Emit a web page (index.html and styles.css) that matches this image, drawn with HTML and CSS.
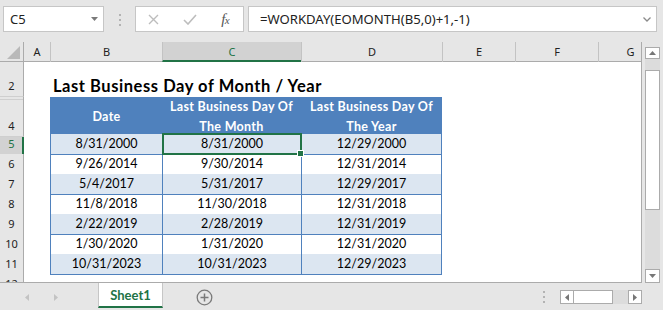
FILE: index.html
```html
<!DOCTYPE html>
<html>
<head>
<meta charset="utf-8">
<link rel="stylesheet" href="styles.css">
</head>
<body>
<div class="toolbar">
  <div class="namebox"><span>C5</span><svg width="7" height="4" viewBox="0 0 7 4"><path d="M0 0h7L3.5 4z" fill="#7a7a7a"/></svg></div>
  <div class="grip"><i></i><i></i><i></i></div>
  <div class="fbtns">
    <span class="fb"><svg width="11" height="11" viewBox="0 0 11 11"><path d="M1 1l9 9M10 1l-9 9" stroke="#bdbdbd" stroke-width="1.4" fill="none"/></svg></span>
    <span class="fb"><svg width="14" height="11" viewBox="0 0 14 11"><path d="M1 6l4 4 8-9" stroke="#bdbdbd" stroke-width="1.6" fill="none"/></svg></span>
    <span class="fb fx"><i>f<small>x</small></i></span>
  </div>
  <div class="formula"><span>=WORKDAY(EOMONTH(B5,0)+1,-1)</span><svg width="8" height="5" viewBox="0 0 8 5"><path d="M0.5 0.5l3.5 3.5 3.5-3.5" stroke="#8a8a8a" stroke-width="1.3" fill="none"/></svg></div>
</div>
<div class="main">
  <div class="sheet">
    <div class="row colhdr">
      <div class="corner"><svg width="13" height="13" viewBox="0 0 13 13"><path d="M13 0v13H0z" fill="#b9b9b9"/></svg></div>
      <div class="ch">A</div><div class="ch">B</div><div class="ch sel">C</div><div class="ch">D</div><div class="ch">E</div><div class="ch">F</div><div class="ch">G</div>
    </div>
    <div class="row r2">
      <div class="rh">2</div><div></div>
      <div class="title">Last Business Day of Month / Year</div>
    </div>
    <div class="row r4">
      <div class="rh rh4">4</div><div></div>
      <div class="th first">Date</div>
      <div class="th">Last Business Day Of<br>The Month</div>
      <div class="th">Last Business Day Of<br>The Year</div>
    </div>
    <div class="row body alt">
      <div class="rh rhsel">5</div><div></div>
      <div class="td first">8/31/2000</div><div class="td cur">8/31/2000</div><div class="td last">12/29/2000</div>
    </div>
    <div class="row body">
      <div class="rh">6</div><div></div>
      <div class="td first">9/26/2014</div><div class="td">9/30/2014</div><div class="td last">12/31/2014</div>
    </div>
    <div class="row body alt">
      <div class="rh">7</div><div></div>
      <div class="td first">5/4/2017</div><div class="td">5/31/2017</div><div class="td last">12/29/2017</div>
    </div>
    <div class="row body">
      <div class="rh">8</div><div></div>
      <div class="td first">11/8/2018</div><div class="td">11/30/2018</div><div class="td last">12/31/2018</div>
    </div>
    <div class="row body alt">
      <div class="rh">9</div><div></div>
      <div class="td first">2/22/2019</div><div class="td">2/28/2019</div><div class="td last">12/31/2019</div>
    </div>
    <div class="row body">
      <div class="rh">10</div><div></div>
      <div class="td first">1/30/2020</div><div class="td">1/31/2020</div><div class="td last">12/31/2020</div>
    </div>
    <div class="row body alt">
      <div class="rh">11</div><div></div>
      <div class="td first">10/31/2023</div><div class="td">10/31/2023</div><div class="td last">12/29/2023</div>
    </div>
    <div class="row">
      <div class="rh">12</div>
    </div>
  </div>
  <div class="vscroll">
    <div class="sbtn up"><svg width="7" height="4" viewBox="0 0 7 4"><path d="M0 4h7L3.5 0z" fill="#777"/></svg></div>
    <div class="vtrack"><div class="vthumb"></div></div>
    <div class="sbtn down"><svg width="7" height="4" viewBox="0 0 7 4"><path d="M0 0h7L3.5 4z" fill="#777"/></svg></div>
  </div>
</div>
<div class="bottombar">
  <svg class="nav navl" width="4" height="7" viewBox="0 0 4 7"><path d="M4 0v7L0 3.5z" fill="#c3c3c3"/></svg>
  <svg class="nav navr" width="4" height="7" viewBox="0 0 4 7"><path d="M0 0v7L4 3.5z" fill="#c3c3c3"/></svg>
  <div class="tab">Sheet1</div>
  <svg class="plus" width="17" height="17" viewBox="0 0 17 17"><circle cx="8.5" cy="8.5" r="7.3" stroke="#7a7a7a" stroke-width="1.3" fill="none"/><path d="M8.5 4.5v8M4.5 8.5h8" stroke="#7a7a7a" stroke-width="1.5"/></svg>
  <div class="hgrip"><i></i><i></i><i></i></div>
  <div class="hscroll">
    <div class="hbtn"><svg width="4" height="7" viewBox="0 0 4 7"><path d="M4 0v7L0 3.5z" fill="#777"/></svg></div>
    <div class="hthumb"></div>
    <div class="htrack"></div>
    <div class="hbtn"><svg width="4" height="7" viewBox="0 0 4 7"><path d="M0 0v7L4 3.5z" fill="#777"/></svg></div>
  </div>
</div>
</body>
</html>
```

FILE: styles.css
```css
*, *::before, *::after { box-sizing: border-box; margin: 0; padding: 0; }
html, body { width: 663px; height: 310px; overflow: hidden; }
body { background: #e6e6e6; font-family: "Noto Sans", "Open Sans", sans-serif; color: #222; }

.toolbar { height: 42px; display: flex; align-items: flex-start; padding-top: 6px; }
.namebox { margin-left: 3px; width: 101px; height: 26px; background: #fff; border: 1px solid #c6c6c6; display: flex; align-items: center; justify-content: space-between; padding: 0 5px 0 6px; font-size: 13px; color: #222; }
.grip { width: 31px; display: flex; flex-direction: column; align-items: center; gap: 3px; padding-top: 8px; }
.grip i, .hgrip i { display: block; width: 2px; height: 2px; background: #b3b3b3; }
.fbtns { width: 109px; height: 26px; background: #fff; border: 1px solid #c6c6c6; display: flex; align-items: center; }
.fb { width: 36px; height: 24px; display: flex; align-items: center; justify-content: center; }
.fx i { font-family: "Liberation Serif", serif; font-style: italic; font-size: 15px; color: #555; letter-spacing: -0.5px; }
.fx small { font-size: 11px; }
.formula { margin-left: 4px; width: 409px; height: 26px; background: #fff; border: 1px solid #c6c6c6; display: flex; align-items: center; justify-content: space-between; padding: 0 5px 0 11px; font-size: 13.1px; color: #222; }

.main { display: flex; height: 241px; }
.sheet { width: 642px; height: 241px; background: #fff; border-right: 1px solid #ababab; border-bottom: 1px solid #ababab; overflow: hidden; }
.row { display: grid; grid-template-columns: 24px 26px 112px 139px 141px 73px 83px 64px; height: 20px; }
.colhdr { height: 20px; background: #e6e6e6; border-bottom: 1px solid #ababab; }
.corner { border-right: 1px solid #ababab; display: flex; align-items: flex-end; justify-content: flex-end; padding: 0 3px 3px 0; }
.ch { border-left: 1px solid #c3c3c3; font-size: 11px; line-height: 19px; text-align: center; color: #222; }
.ch:nth-child(2) { border-left: none; }
.ch.sel { background: #d2d2d2; color: #217346; border-bottom: 2px solid #217346; height: 20px; }

.rh { background: #e6e6e6; border-right: 1px solid #ababab; border-bottom: 1px solid #cfcfcf; font-size: 11px; line-height: 20px; text-align: center; display: flex; align-items: flex-end; justify-content: center; color: #222; }
.rhsel { background: #d2d2d2; color: #217346; border-right: 2px solid #217346; padding-left: 1px; }
.r2 { height: 35px; }
.r4 { height: 37px; }
.rh4 { position: relative; }
.rh4::before { content: ""; position: absolute; left: 0; right: 0; top: 2px; border-top: 1px solid #cfcfcf; }

.title { font-family: Lato, "Liberation Sans", sans-serif; font-weight: 700; font-size: 16.5px; letter-spacing: 0.55px; line-height: 20px; white-space: nowrap; align-self: end; padding: 0 0 1px 3px; color: #000; }

.th { background: #4f81bd; color: #fff; font-family: Lato, "Liberation Sans", sans-serif; font-weight: 700; font-size: 12.5px; letter-spacing: 0.3px; line-height: 20px; text-align: center; display: flex; align-items: center; justify-content: center; white-space: nowrap; }
.th.first { border-left: 1px solid #4f81bd; }

.td { font-family: Lato, "Liberation Sans", sans-serif; font-size: 12.5px; line-height: 19px; text-align: center; color: #000; border-left: 1px solid #4f81bd; border-bottom: 1px solid #4f81bd; }
.td.last { border-right: 1px solid #4f81bd; }
.alt .td { background: #dce6f1; }
.cur { position: relative; }
.cur::after { content: ""; position: absolute; left: -1px; top: -1px; width: 140px; height: 22px; border: 2px solid #217346; }
.cur::before { content: ""; position: absolute; left: 134px; top: 16px; width: 7px; height: 7px; background: #217346; border: 1px solid #fff; z-index: 2; }

.vscroll { margin-left: 3px; width: 15px; display: flex; flex-direction: column; }
.sbtn { width: 15px; height: 12px; background: #fff; border: 1px solid #ababab; display: flex; align-items: center; justify-content: center; }
.up { margin-top: 5px; }
.vtrack { flex: 1; background: #dcdcdc; padding-top: 11px; }
.vthumb { height: 140px; background: #fff; border: 1px solid #ababab; }
.down { height: 14px; }

.bottombar { height: 27px; display: flex; align-items: center; }
.nav { margin-top: 1px; }
.navl { margin-left: 25px; }
.navr { margin-left: 25px; }
.tab { margin-left: 40px; align-self: flex-start; width: 65px; height: 25px; background: #fff; border-left: 1px solid #c6c6c6; border-right: 1px solid #c6c6c6; border-bottom: 2px solid #217346; font-family: Lato, "Liberation Sans", sans-serif; font-weight: 700; font-size: 13px; color: #217346; text-align: center; line-height: 24px; }
.plus { margin-left: 33px; margin-top: 1px; }
.hgrip { margin-left: 330px; display: flex; flex-direction: column; gap: 3px; margin-top: 1px; }
.hscroll { margin-left: 15px; display: flex; height: 14px; margin-top: 1px; }
.hbtn { width: 14px; height: 14px; background: #fff; border: 1px solid #ababab; display: flex; align-items: center; justify-content: center; }
.hthumb { width: 39px; height: 14px; background: #fff; border: 1px solid #ababab; border-left: none; }
.htrack { width: 15px; background: #dcdcdc; }
```
